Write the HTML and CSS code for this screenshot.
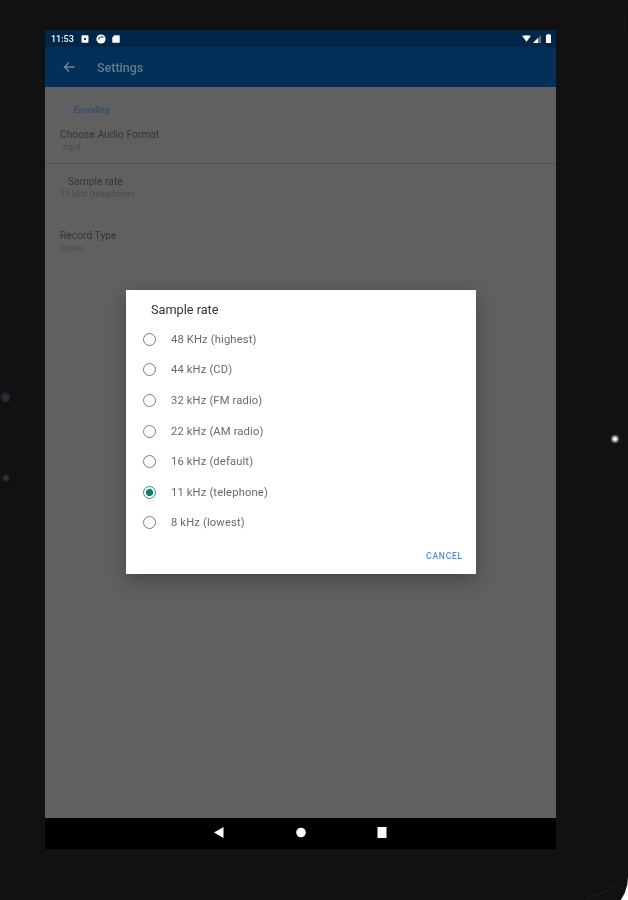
FILE: index.html
```html
<!DOCTYPE html>
<html lang="en">
<head>
<meta charset="utf-8">
<title>Settings</title>
<link rel="stylesheet" href="styles.css">
</head>
<body>
<div class="device">
  <span class="dot dot-a"></span>
  <span class="dot dot-b"></span>
  <span class="dot dot-c"></span>
  <span class="arc-top"></span>
  <span class="arc-bottom"></span>
  <div class="screen">
    <div class="status">
      <div class="status-left">
        <span class="time">11:53</span>
        <svg class="ic" viewBox="0 0 8 8"><rect width="7" height="7.4" x=".5" y=".3" rx=".8" fill="#fff"/><rect x="3" y="3" width="2" height="2" fill="#1c3a5a"/></svg>
        <svg class="ic ic-round" viewBox="0 0 10 10"><circle cx="5" cy="5" r="4.6" fill="#fff"/><path d="M7.4 3.4A3 3 0 0 0 2.6 5.6" fill="none" stroke="#29486a" stroke-width="1.2"/></svg>
        <svg class="ic" viewBox="0 0 8 8"><path d="M2.4.2H7.2a.5.5 0 0 1 .5.5V7.3a.5.5 0 0 1-.5.5H.8a.5.5 0 0 1-.5-.5V2.4z" fill="#fff"/></svg>
      </div>
      <div class="status-right">
        <svg class="wifi" viewBox="0 0 10 7"><path d="M0 .4Q5-.6 10 .4L5 7z" fill="#fff"/></svg>
        <svg class="signal" viewBox="0 0 8 8"><path d="M8 0V8H0z" fill="#fff" opacity=".35"/><path d="M5 3V8H0z" fill="#fff"/></svg>
        <svg class="battery" viewBox="0 0 5 9"><path d="M1.5 0h2v.8H5V9H0V.8h1.5z" fill="#fff"/></svg>
      </div>
    </div>
    <div class="toolbar">
      <svg class="back" viewBox="0 0 12 12"><path d="M11.5 6H1.5M6 1.5 1.5 6 6 10.500" fill="none" stroke="currentColor" stroke-width="1.300"/></svg>
      <span class="toolbar-title">Settings</span>
    </div>
    <div class="content">
      <div class="section">Encoding</div>
      <div class="pref pref-first">
        <div class="pref-title">Choose Audio Format</div>
        <div class="pref-sub pref-sub-first">mp4</div>
      </div>
      <div class="pref pref-second">
        <div class="pref-title pref-title-in">Sample rate</div>
        <div class="pref-sub">11 kHz (telephone)</div>
      </div>
      <div class="pref pref-third">
        <div class="pref-title">Record Type</div>
        <div class="pref-sub">mono</div>
      </div>
    </div>
    <div class="nav">
      <svg class="nav-ic" viewBox="0 0 10 11"><path d="M9.500 0V11L0 5.500z" fill="#fff"/></svg>
      <svg class="nav-ic" viewBox="0 0 10 10"><circle cx="5" cy="5" r="4.800" fill="#fff"/></svg>
      <svg class="nav-ic" viewBox="0 0 10 11"><rect x=".5" width="9" height="11" fill="#fff"/></svg>
    </div>
  </div>
  <div class="dialog">
    <div class="dialog-title">Sample rate</div>
    <div class="opts">
      <div class="opt"><span class="radio"></span><span>48 KHz (highest)</span></div>
      <div class="opt"><span class="radio"></span><span>44 kHz (CD)</span></div>
      <div class="opt"><span class="radio"></span><span>32 kHz (FM radio)</span></div>
      <div class="opt"><span class="radio"></span><span>22 kHz (AM radio)</span></div>
      <div class="opt"><span class="radio"></span><span>16 kHz (default)</span></div>
      <div class="opt"><span class="radio radio-on"></span><span>11 kHz (telephone)</span></div>
      <div class="opt"><span class="radio"></span><span>8 kHz (lowest)</span></div>
    </div>
    <div class="actions"><span class="cancel">CANCEL</span></div>
  </div>
</div>
</body>
</html>
```
FILE: styles.css
```css
* { box-sizing: border-box; }
html, body { margin: 0; height: 100%; background: #fff; overflow: hidden; }
body { font-family: Roboto, "Liberation Sans", sans-serif; }
.device {
  position: relative;
  width: 628px;
  height: 917px;
  padding: 30px 0 0 45px;
  background: #111;
  border-bottom-right-radius: 40px;
}
.dot { position: absolute; border-radius: 50%; filter: blur(1px); }
.dot-a { left: 1px; top: 393px; width: 9px; height: 9px; background: #2e2e3c; }
.dot-b { left: 3px; top: 475px; width: 6px; height: 6px; background: #343434; }
.dot-c { left: 612px; top: 436px; width: 6px; height: 6px; background: #fff; }
.arc-top {
  position: absolute;
  left: 545px;
  top: -25px;
  width: 80px;
  height: 60px;
  border-top: 1px solid #1a1a1a;
  border-right: 1px solid #161616;
  border-top-right-radius: 40px;
}
.arc-bottom {
  position: absolute;
  left: 587px;
  top: 857px;
  width: 40px;
  height: 40px;
  border-right: 1px solid transparent;
  border-bottom: 1px solid #1e1e1e;
  border-bottom-right-radius: 40px;
}
.screen {
  width: 511px;
  height: 819px;
  display: flex;
  flex-direction: column;
  background: #606060;
}
.status {
  height: 17px;
  flex: none;
  display: flex;
  justify-content: space-between;
  align-items: center;
  padding: 0 5px 0 6px;
  background: #012648;
}
.status-left, .status-right { display: flex; align-items: center; }
.time { font-size: 9px; font-weight: 500; color: #f0f4f8; width: 30px; filter: blur(.4px); }
.ic { width: 8px; height: 8px; margin-right: 8px; }
.ic-round { width: 10px; height: 10px; margin-right: 6px; margin-left: -1px; }
.wifi { width: 9px; height: 7px; margin-right: 2px; }
.signal { width: 8px; height: 8px; margin-right: 5px; }
.battery { width: 5px; height: 9px; }
.toolbar {
  height: 40px;
  flex: none;
  display: flex;
  align-items: center;
  padding-left: 18px;
  background: #023058;
  color: #667b90;
}
.back { width: 12px; height: 12px; margin-right: 22px; color: #76879a; }
.toolbar-title { font-size: 12.500px; font-weight: 500; filter: blur(.5px); }
.content { flex: 1; min-height: 0; }
.section { padding: 18px 0 0 29px; font-size: 8.500px; font-weight: 500; line-height: 11px; color: #2f4e72; filter: blur(.5px); }
.pref { padding-left: 15px; }
.pref-first { height: 48px; padding-top: 12px; border-bottom: 1px solid #525252; }
.pref-second { height: 49px; padding-top: 11px; border-bottom: 1px solid #5c5c5c; }
.pref-third { height: 53px; padding-top: 16px; border-bottom: 1px solid #5d5d5d; }
.pref-title { font-size: 10.300px; line-height: 13px; color: #363636; filter: blur(.5px); }
.pref-title-in { padding-left: 8px; }
.pref-sub { padding-top: 1px; font-size: 8.900px; line-height: 10px; color: #4a4a4a; filter: blur(.6px); }
.pref-sub-first { padding-left: 3px; }
.nav {
  height: 31px;
  flex: none;
  display: flex;
  justify-content: center;
  align-items: center;
  gap: 71.500px;
  padding-bottom: 2px;
  background: #000;
}
.nav-ic { width: 10px; height: 11px; }
.dialog {
  position: absolute;
  left: 126px;
  top: 290px;
  width: 350px;
  height: 284px;
  display: flex;
  flex-direction: column;
  background: #fff;
  box-shadow: 0 6px 18px rgba(0, 0, 0, .28);
}
.dialog-title { padding: 13px 0 0 25px; font-size: 12.700px; font-weight: 400; line-height: 14px; color: #333; filter: blur(.5px); }
.opts { margin-top: 7px; }
.opt {
  height: 30.600px;
  display: flex;
  align-items: center;
  padding-left: 17px;
  gap: 15px;
  font-size: 11.200px;
  letter-spacing: .15px;
  color: #6a6a6a;
}
.opt span:last-child { filter: blur(.5px); }
.radio {
  width: 13px;
  height: 13px;
  flex: none;
  border: 1.300px solid #7b7b7b;
  border-radius: 50%;
  filter: blur(.25px);
}
.radio-on {
  border-color: #1d9a86;
  background: radial-gradient(circle, #0b7f6c 0 3.200px, #fff 3.900px);
}
.actions { display: flex; justify-content: flex-end; padding: 13px 13px 0 0; }
.cancel { font-size: 8.500px; font-weight: 500; letter-spacing: .8px; line-height: 11px; color: #4a90d9; filter: blur(.4px); }
```
